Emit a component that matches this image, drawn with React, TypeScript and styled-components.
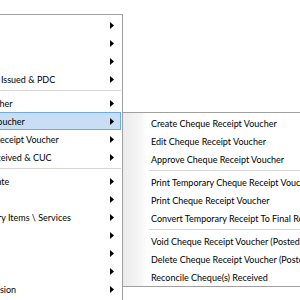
import React from "react";
import styled, { createGlobalStyle } from "styled-components";

const GlobalStyle = createGlobalStyle`
  html, body { margin: 0; padding: 0; background: #ffffff; }
  body { font-family: "Lato", "Liberation Sans", sans-serif; }
  * { box-sizing: border-box; }
`;

const Screen = styled.div`
  position: relative;
  width: 300px;
  height: 300px;
  overflow: hidden;
  background: #ffffff;
`;

const MainMenu = styled.div`
  position: absolute;
  left: -62px;
  top: 14px;
  width: 185px;
  height: 320px;
  background: #ffffff;
  border: 1px solid #a0a0a0;
  padding: 1px 1px 0 1px;
  display: flex;
  flex-direction: column;
`;

const SubMenu = styled.div`
  position: absolute;
  left: 122px;
  top: 112px;
  width: 230px;
  background: linear-gradient(to right, #ebebeb 0px, #f6f6f6 18px, #ffffff 24px);
  border: 1px solid #a0a0a0;
  padding: 1px 1px 0 0;
  display: flex;
  flex-direction: column;
`;

const Item = styled.div<{ $selected?: boolean; $indent: number }>`
  height: 18px;
  display: flex;
  align-items: center;
  padding-left: ${(p) => p.$indent}px;
  font-size: 9px;
  color: #000000;
  white-space: nowrap;
  border: 1px solid ${(p) => (p.$selected ? "#72a9e3" : "transparent")};
  background: ${(p) => (p.$selected ? "#c8def5" : "transparent")};
`;

const Label = styled.span`
  flex: 1;
  margin-left: -1px;
`;

const ArrowBox = styled.svg`
  flex: none;
  margin-right: 6px;
`;

const Separator = styled.div<{ $inset: number }>`
  height: ${(p) => (p.$inset > 20 ? 5 : 6)}px;
  padding-top: 2px;
  margin-left: ${(p) => p.$inset}px;
  &::before {
    content: "";
    display: block;
    height: 1px;
    background: #d7d7d7;
  }
`;

const Arrow = () => (
  <ArrowBox width="4" height="7" viewBox="0 0 4 7">
    <polygon points="0,0 4,3.5 0,7" fill="#000000" />
  </ArrowBox>
);

type Entry = { label?: string; sep?: boolean; selected?: boolean };

const mainEntries: Entry[] = [
  { label: "Cash" },
  { label: "Bank" },
  { label: "Sales" },
  { label: "Cheque Issued & PDC" },
  { sep: true },
  { label: "JV Voucher" },
  { label: "Debit Voucher", selected: true },
  { label: "Direct Receipt Voucher" },
  { label: "Chq Received & CUC" },
  { sep: true },
  { label: "Certificate" },
  { label: "Stock" },
  { label: "Inventory Items \\ Services" },
  { label: "Assets" },
  { label: "Loans" },
  { label: "Payroll" },
  { label: "Commission" },
];

const subEntries: Entry[] = [
  { label: "Create Cheque Receipt Voucher" },
  { label: "Edit Cheque Receipt Voucher" },
  { label: "Approve Cheque Receipt Voucher" },
  { sep: true },
  { label: "Print Temporary Cheque Receipt Voucher" },
  { label: "Print Cheque Receipt Voucher" },
  { label: "Convert Temporary Receipt To Final Receipt" },
  { sep: true },
  { label: "Void Cheque Receipt Voucher (Posted)" },
  { label: "Delete Cheque Receipt Voucher (Posted)" },
  { label: "Reconcile Cheque(s) Received" },
];

export default function App() {
  return (
    <>
      <GlobalStyle />
      <Screen>
        <MainMenu>
          {mainEntries.map((e, i) =>
            e.sep ? (
              <Separator key={i} $inset={0} />
            ) : (
              <Item key={i} $selected={e.selected} $indent={28}>
                <Label>{e.label}</Label>
                <Arrow />
              </Item>
            )
          )}
        </MainMenu>
        <SubMenu>
          {subEntries.map((e, i) =>
            e.sep ? (
              <Separator key={i} $inset={26} />
            ) : (
              <Item key={i} $indent={28}>
                <Label>{e.label}</Label>
              </Item>
            )
          )}
        </SubMenu>
      </Screen>
    </>
  );
}
